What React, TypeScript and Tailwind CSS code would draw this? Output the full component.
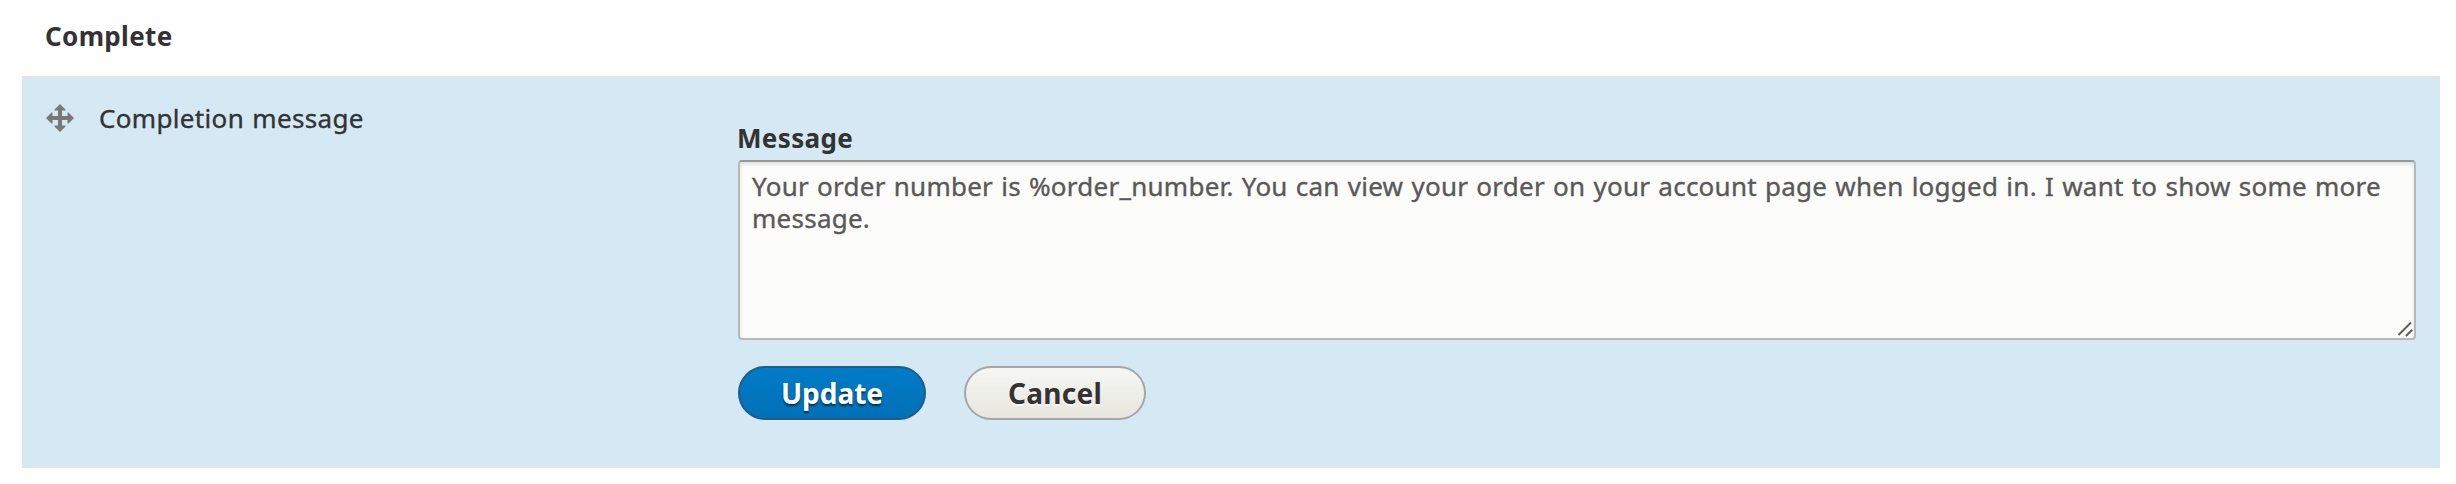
function MoveIcon() {
  return (
    <svg className="block h-7 w-7 shrink-0" viewBox="0 0 28 28" fill="#787878">
      <path d="M14 0 L19.5 5.5 V6.5 H16 V12 H21.5 V8.5 H22.5 L28 14 L22.5 19.5 H21.5 V16 H16 V21.5 H19.5 V22.5 L14 28 L8.5 22.5 V21.5 H12 V16 H6.5 V19.5 H5.5 L0 14 L5.5 8.5 H6.5 V12 H12 V6.5 H8.5 V5.5 Z" />
    </svg>
  );
}

function ResizeHandle() {
  return (
    <svg
      className="pointer-events-none absolute right-[3px] bottom-[3px] h-4 w-4"
      viewBox="0 0 16 16"
      fill="none"
      stroke="#5e5e5e"
      strokeWidth="2"
    >
      <path d="M1.5 14 L14 1.5 M9 15 L15.2 8.8" />
    </svg>
  );
}

export default function App() {
  return (
    <div className="h-[484px] w-[2456px] overflow-hidden bg-white pr-4 pl-[22px] font-['Noto_Sans',sans-serif] text-[26px] leading-8 text-[#333]">
      <div className="h-[76px] pt-5 pl-[23px] font-bold">
        <span className="tracking-[0.35px]">Complete</span>
      </div>
      <div className="flex h-[392px] border-y-2 border-[#e6e4df] bg-[#d5e9f4] pr-6 pl-6">
        <div className="flex w-[692px] items-start gap-[25px] pt-6">
          <div className="pt-[2px]">
            <MoveIcon />
          </div>
          <span className="tracking-[0.33px] [-webkit-text-stroke:0.35px_#333] [word-spacing:1.2px]">
            Completion message
          </span>
        </div>
        <div className="w-[1678px] pt-11">
          <label htmlFor="message" className="-ml-px block h-[38px] font-bold">
            <span className="tracking-[0.35px]">Message</span>
          </label>
          <div className="relative h-[180px]">
            <textarea
              id="message"
              className="block h-full w-full resize-none overflow-hidden rounded-[4px] border-2 border-[#b8b8b8] border-t-[#999] bg-[#fcfcfa] py-2 pr-3 pl-3 tracking-[0.25px] text-[#595959] shadow-[inset_0_2px_4px_rgba(0,0,0,0.12)] outline-none [-webkit-text-stroke:0.35px_#595959] [word-spacing:1.1px]"
              defaultValue="Your order number is %order_number. You can view your order on your account page when logged in. I want to show some more message."
            />
            <ResizeHandle />
          </div>
          <div className="mt-[26px] flex gap-[38px] text-[28px] font-bold">
            <button className="flex h-[54px] w-[188px] items-center justify-center rounded-full border-2 border-[#1e5c90] bg-linear-to-b from-[#007bc6] to-[#0071b8] text-white [text-shadow:0_2px_2px_rgba(0,0,0,0.6)]">
              <span>Update</span>
            </button>
            <button className="flex h-[54px] w-[182px] items-center justify-center rounded-full border-2 border-[#a6a6a6] bg-linear-to-b from-[#f6f6f3] to-[#e7e7df] [text-shadow:0_2px_0_rgba(255,255,255,0.6)]">
              <span className="tracking-[0.25px]">Cancel</span>
            </button>
          </div>
        </div>
      </div>
    </div>
  );
}
